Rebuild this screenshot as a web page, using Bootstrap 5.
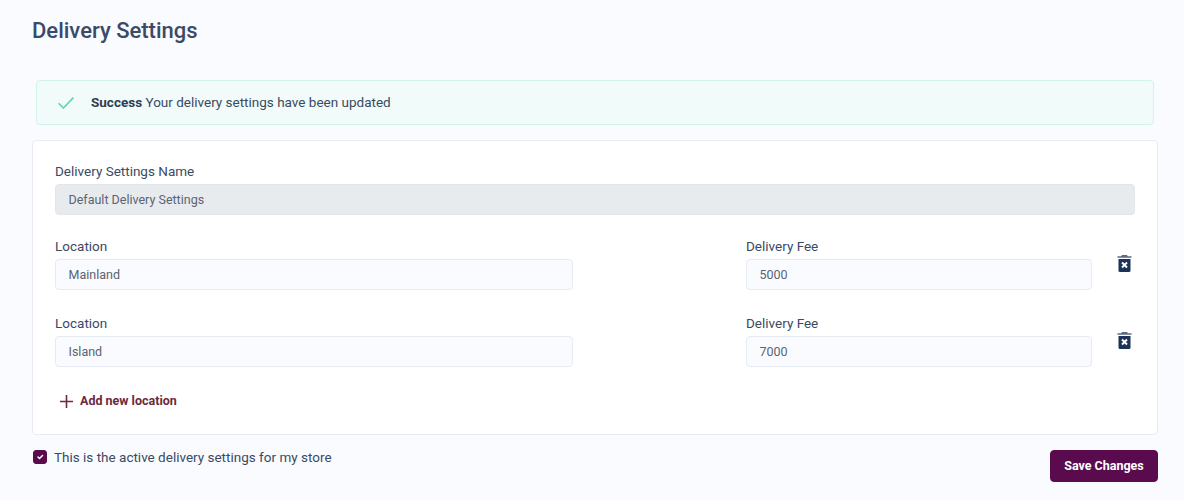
<!DOCTYPE html>
<html lang="en">
<head>
<meta charset="utf-8">
<title>Delivery Settings</title>
<link href="https://cdn.jsdelivr.net/npm/bootstrap@5.3.0/dist/css/bootstrap.min.css" rel="stylesheet">
<style>
html,body{height:500px;overflow:hidden}
body{background:#f9fbfe;font-family:Roboto,"Liberation Sans",sans-serif;color:#3b4a63;font-size:13.5px}
.page-wrap{padding:18px 26px 0 32px}
.page-title{font-size:22px;font-weight:500;line-height:26px;color:#3a4a68;margin:0 0 36px}
.ok-alert{margin:0 4px 15px;height:45px;background:#f0fbfa;border:1px solid #d3f2ec;border-radius:4px;padding:0 20px 0 21px;color:#3b4a63;font-size:13.5px}
.ok-alert strong{font-weight:700;color:#2f3c52}
.ok-alert svg{margin-right:17px}
.form-panel{background:#fff;border:1px solid #e8ecf2;border-radius:4px;height:295px;padding:21px 22px 0}
.fld-label{display:block;font-size:13.5px;line-height:18px;color:#3b4a63;margin-bottom:4px}
.fld-input{height:31px;font-size:12.5px;color:#5b6472;background:#f9fbfe;border:1.5px solid #e6ebf3;border-radius:4px;padding:0 12.5px;font-family:inherit}
.fld-input:disabled{background:#e8ebee;border-color:#e2e5e9;color:#5b6472;opacity:1}
.name-group{margin-bottom:22px}
.loc-row{margin-bottom:24px}
.loc-row + .loc-row .trash-btn{margin-top:16px}
.loc-field{width:518px}
.fee-field{width:346px;margin-left:173px}
.trash-btn{margin-left:25px;margin-top:16px;padding:0;border:0;background:none;line-height:0;height:20px}
.add-loc{color:#6b2a3e;font-size:12.5px;font-weight:700;padding:0 5px;text-decoration:none;margin-top:1px}
.add-loc svg{margin-right:7px}
.foot-row{margin-top:13px}
.act-check{padding:0;margin:0;min-height:0;color:#3b4a63}
.act-check .form-check-input{float:none;margin:0 7px 0 1px;width:14px;height:14px;background-color:#5a0b4d;border-color:#5a0b4d;border-radius:3px;background-size:10px}
.act-check .form-check-label{line-height:18px}
.save-btn{background:#5a0b4d;border:1px solid #5a0b4d;color:#fff;font-size:12.5px;font-weight:700;width:108px;height:32px;padding:0;border-radius:4px;margin-top:2px}
</style>
</head>
<body>
<div class="page-wrap">
  <h1 class="page-title">Delivery Settings</h1>
  <div class="ok-alert d-flex align-items-center" role="alert">
    <svg width="16" height="12" viewBox="0 0 16 12" fill="none" stroke="#5fd3b4" stroke-width="1.6"><path d="M.6 6.2 5.4 11 15.4.6"/></svg>
    <span><strong>Success</strong> Your delivery settings have been updated</span>
  </div>
  <form class="form-panel">
    <div class="name-group">
      <label class="fld-label">Delivery Settings Name</label>
      <input class="form-control fld-input" value="Default Delivery Settings" disabled>
    </div>
    <div class="d-flex loc-row">
      <div class="loc-field"><label class="fld-label">Location</label><input class="form-control fld-input" value="Mainland"></div>
      <div class="fee-field"><label class="fld-label">Delivery Fee</label><input class="form-control fld-input" value="5000"></div>
      <button type="button" class="trash-btn" aria-label="Delete"><svg width="15" height="17" viewBox="0 0 15 17"><path fill="#5d6b80" d="M5 0h5l.8 1.2H14.5V2.8H.5V1.2H4.2z"/><path fill="#1b3358" d="M1.5 4h12v11.5a1.5 1.5 0 0 1-1.5 1.5H3a1.5 1.5 0 0 1-1.500-1.500z"/><path stroke="#fff" stroke-width="2" d="M5 7.500l5 5M10 7.500l-5 5"/></svg></button>
    </div>
    <div class="d-flex loc-row">
      <div class="loc-field"><label class="fld-label">Location</label><input class="form-control fld-input" value="Island"></div>
      <div class="fee-field"><label class="fld-label">Delivery Fee</label><input class="form-control fld-input" value="7000"></div>
      <button type="button" class="trash-btn" aria-label="Delete"><svg width="15" height="17" viewBox="0 0 15 17"><path fill="#5d6b80" d="M5 0h5l.8 1.2H14.5V2.8H.5V1.2H4.2z"/><path fill="#1b3358" d="M1.5 4h12v11.5a1.5 1.5 0 0 1-1.5 1.5H3a1.5 1.5 0 0 1-1.500-1.500z"/><path stroke="#fff" stroke-width="2" d="M5 7.500l5 5M10 7.500l-5 5"/></svg></button>
    </div>
    <a href="#" class="add-loc d-inline-flex align-items-center"><svg width="13" height="13" viewBox="0 0 13 13" stroke="#6b2a3e" stroke-width="1.6"><path d="M6.500 0v13M0 6.500h13"/></svg>Add new location</a>
  </form>
  <div class="d-flex justify-content-between align-items-start foot-row">
    <div class="form-check act-check d-flex align-items-center">
      <input class="form-check-input" type="checkbox" id="act" checked>
      <label class="form-check-label" for="act">This is the active delivery settings for my store</label>
    </div>
    <button type="button" class="btn save-btn">Save Changes</button>
  </div>
</div>
</body>
</html>
